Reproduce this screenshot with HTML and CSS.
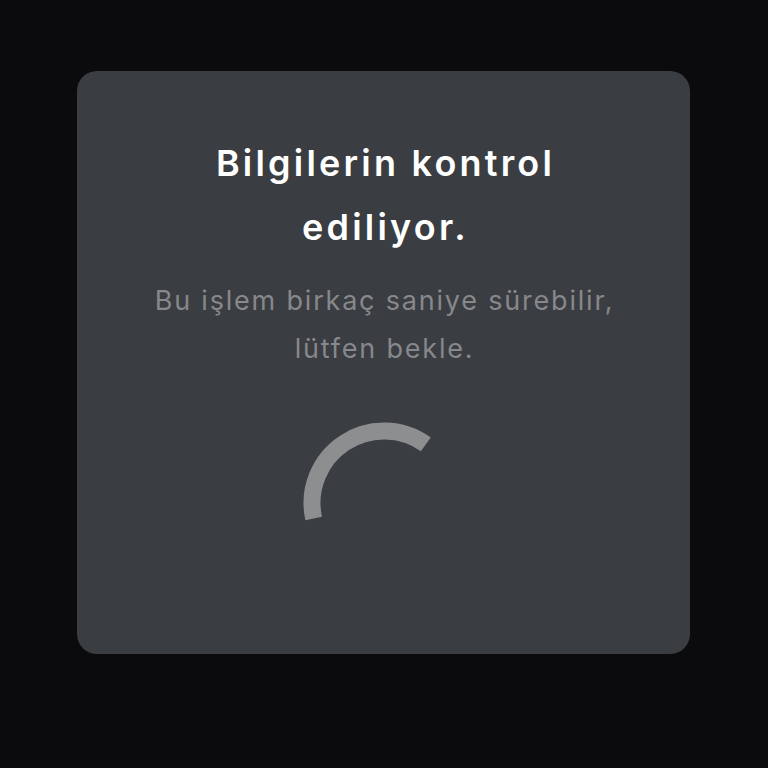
FILE: index.html
```html
<!DOCTYPE html>
<html lang="tr">
<head>
    <meta charset="UTF-8">
    <meta name="viewport" content="width=device-width, initial-scale=1.0">
    <title>Bilgilerin kontrol ediliyor</title>
    <link rel="stylesheet" href="styles.css">
</head>
<body>
    <div class="card">
        <h1 class="title">Bilgilerin kontrol<br>ediliyor.</h1>
        <p class="subtitle">Bu işlem birkaç saniye sürebilir,<br>lütfen bekle.</p>

        <!-- loading spinner -->
        <div class="spinner">
            <svg width="166" height="166" viewBox="0 0 166 166">
                <path d="M12.7 98.5 A72 72 0 0 1 124.8 24.4" fill="none" stroke="#8d8e90" stroke-width="17"/>
            </svg>
        </div>
    </div>
</body>
</html>
```

FILE: styles.css
```css
body {
    margin: 0;
    background: #0b0b0d;
    font-family: Inter, "Noto Sans", sans-serif;
}
.card {
    width: 613px;
    height: 583px;
    box-sizing: border-box;
    margin: 71px auto 0 77px;
    padding-top: 60px;
    background: #3a3d41;
    border-radius: 20px;
    display: flex;
    flex-direction: column;
    align-items: center;
    text-align: center;
}
.title {
    margin: 0 0 0 4px;
    color: #ffffff;
    font-size: 36px;
    font-weight: 600;
    line-height: 64px;
    letter-spacing: 3.2px;
}
.subtitle {
    margin: 18px 0 0 2px;
    color: #86888b;
    font-size: 27px;
    line-height: 48px;
    letter-spacing: 1.8px;
}
.spinner {
    margin-top: 47px;
    width: 166px;
    height: 166px;
}
.spinner svg {
    display: block;
}
```
